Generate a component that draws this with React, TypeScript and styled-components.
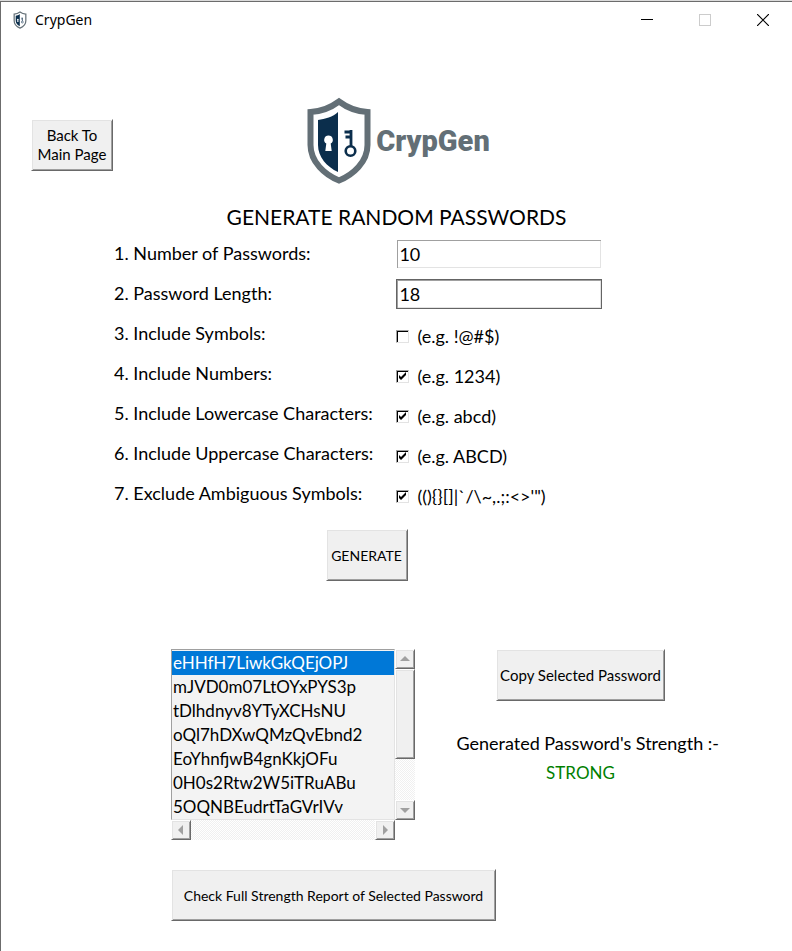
import React, { useState } from "react";
import styled, { createGlobalStyle, css } from "styled-components";

const GlobalStyle = createGlobalStyle`
  * { box-sizing: border-box; }
  body {
    margin: 0;
    background: #fff;
    color: #000;
    font-family: Lato, "Open Sans", sans-serif;
    font-variant-ligatures: none;
  }
`;

const Window = styled.div`
  min-height: 100vh;
  border-top: 1px solid #dadada;
  background: #fff;
`;

const Frame = styled.div`
  min-height: calc(100vh - 1px);
  border-top: 1px solid #6c6c6c;
  border-left: 1px solid #6c6c6c;
`;

const TitleBar = styled.header`
  display: flex;
  align-items: center;
  height: 36px;
  padding-left: 11px;
`;

const TitleText = styled.span`
  flex: 1;
  padding-left: 7px;
  font-family: "Noto Sans", "Open Sans", sans-serif;
  font-size: 14px;
  line-height: 20px;
`;

const CaptionButton = styled.button`
  display: flex;
  align-items: center;
  justify-content: center;
  width: 58px;
  height: 36px;
  padding: 0;
  border: 0;
  background: transparent;
`;

const Head = styled.div`
  display: grid;
  grid-template-columns: 1fr auto 1fr;
  align-items: start;
  padding: 59px 26px 0 30px;
`;

const BackCell = styled.div`
  padding-top: 22px;
`;

const Button = styled.button<{ $width: number; $compact?: boolean }>`
  min-width: ${(p) => p.$width}px;
  height: 52px;
  padding: 0;
  border: 1px solid;
  border-color: #fff #696969 #696969 #fff;
  box-shadow: inset 1px 1px #e3e3e3, inset -1px -1px #a0a0a0;
  background: #f0f0f0;
  color: #000;
  font-family: inherit;
  font-size: ${(p) => (p.$compact ? "14px" : "15px")};
  line-height: 19px;
  white-space: nowrap;
`;

const Brand = styled.div`
  display: flex;
  align-items: center;
  gap: 5px;
`;

const BrandName = styled.span`
  color: #636f76;
  font-family: Roboto, sans-serif;
  font-size: 29px;
  line-height: 40px;
  font-weight: 900;
`;

const Heading = styled.h1`
  margin: 17px 0 0;
  font-size: 21px;
  line-height: 30px;
  font-weight: 400;
  text-align: center;
`;

const Form = styled.form`
  display: grid;
  grid-template-columns: 282fr 395fr;
  grid-auto-rows: 40px;
  padding-left: 113px;
  margin-top: 2px;
  font-size: 18px;
  line-height: 24px;
`;

const Label = styled.label`
  align-self: center;
  padding-bottom: 2px;
`;

const TextBox = styled.input`
  align-self: center;
  width: 206px;
  height: 30px;
  padding: 0 2px;
  border: 1px solid #fff;
  box-shadow: inset 1px 1px #a0a0a0, inset -1px -1px #e3e3e3;
  outline: none;
  background: #fff;
  color: #000;
  font: inherit;
`;

const ActiveTextBox = styled(TextBox)`
  border-color: #646464;
`;

const Choice = styled.div`
  display: flex;
  align-items: center;
  gap: 8px;
  padding-top: 5px;
`;

const CheckBox = styled.input`
  appearance: none;
  width: 13px;
  height: 13px;
  margin: 0;
  border: 1px solid;
  border-color: #a0a0a0 #e3e3e3 #e3e3e3 #a0a0a0;
  box-shadow: inset 1px 1px #000;
  background: #fff;
  &:checked {
    background: #fff
      url("data:image/svg+xml,%3Csvg xmlns='http://www.w3.org/2000/svg' width='11' height='11'%3E%3Cpath d='M2 4v3l2 2 5-5V1L4 6z'/%3E%3C/svg%3E")
      center no-repeat;
  }
`;

const GenerateRow = styled.div`
  display: flex;
  justify-content: center;
  padding: 15px 60px 0 0;
`;

const Results = styled.section`
  display: flex;
  justify-content: space-between;
  align-items: flex-start;
  padding: 68px 73px 0 170px;
`;

const ListArea = styled.div`
  display: grid;
  grid-template-columns: 224px 20px;
  grid-template-rows: 171px 20px;
`;

const PasswordList = styled.select`
  appearance: none;
  margin: 0;
  padding: 1px 0 0;
  border: 1px solid;
  border-color: #a0a0a0 #e3e3e3 #e3e3e3 #a0a0a0;
  border-radius: 0;
  outline: none;
  overflow: hidden;
  background: #f3f3f3;
  color: #000;
  font-family: inherit;
  font-size: 17px;
  scrollbar-width: none;
  option {
    height: 24px;
    min-height: 24px;
    padding: 1px 1px 1px;
    line-height: 22px;
  }
  option:checked {
    background: #0078d7 linear-gradient(#0078d7, #0078d7);
    color: #fff;
    -webkit-text-fill-color: #fff;
  }
`;

const raised = css`
  border: 1px solid;
  border-color: #fff #696969 #696969 #fff;
  box-shadow: inset 1px 1px #e3e3e3, inset -1px -1px #a0a0a0;
  background: #f0f0f0;
`;

const Track = styled.div<{ $vertical?: boolean }>`
  display: flex;
  flex-direction: ${(p) => (p.$vertical ? "column" : "row")};
  justify-content: space-between;
  background: repeating-conic-gradient(#fff 0 25%, #f0f0f0 0 50%) 0 0 / 2px 2px;
`;

const ArrowButton = styled.button`
  ${raised}
  display: flex;
  align-items: center;
  justify-content: center;
  width: 20px;
  height: 20px;
  padding: 0;
`;

const Thumb = styled.div`
  ${raised}
  height: 90px;
  margin-bottom: auto;
`;

const Side = styled.div`
  display: flex;
  flex-direction: column;
  align-items: center;
  width: 277px;
`;

const StrengthLabel = styled.p`
  align-self: flex-end;
  margin: 27px 0 0;
  font-size: 18px;
  line-height: 30px;
  white-space: nowrap;
`;

const Strength = styled.output`
  color: #008000;
  font-size: 17px;
  line-height: 30px;
`;

const ReportRow = styled.div`
  padding: 29px 0 29px 170px;
`;

function Shield({ width, height }: { width: number; height: number }) {
  return (
    <svg width={width} height={height} viewBox="0 0 64 88" aria-hidden="true">
      <path
        d="M32 4.500C24 10.500 14 14.500 3.500 15V48C3.500 65 18 78 32 83.500C46 78 60.500 65 60.500 48V15C50 14.500 40 10.500 32 4.500Z"
        fill="#fff"
        stroke="#636f76"
        strokeWidth="6"
      />
      <path d="M31 15C26 20 18 22 11 23V48C11 60 20 70 31 75Z" fill="#0b2e4c" />
      <path d="M21.500 38.500a4.300 4.300 0 0 1 2.200 8l1 7.500h-6.400l1-7.500a4.300 4.300 0 0 1 2.200-8Z" fill="#fff" />
      <g fill="none" stroke="#0b2e4c">
        <circle cx="43.500" cy="54" r="4.800" strokeWidth="2.600" />
        <path d="M44 49V33M45 35H37.500M44 40H38.500" strokeWidth="2.800" />
      </g>
    </svg>
  );
}

function Arrow({ d }: { d: string }) {
  return (
    <svg width="10" height="10" viewBox="0 0 10 10" aria-hidden="true">
      <path d={d} fill="#a0a0a0" />
    </svg>
  );
}

const passwords = [
  "eHHfH7LiwkGkQEjOPJ",
  "mJVD0m07LtOYxPYS3p",
  "tDlhdnyv8YTyXCHsNU",
  "oQl7hDXwQMzQvEbnd2",
  "EoYhnfjwB4gnKkjOFu",
  "0H0s2Rtw2W5iTRuABu",
  "5OQNBEudrtTaGVrIVv",
];

const options = [
  { id: "symbols", label: "3. Include Symbols:", hint: "(e.g. !@#$)", on: false },
  { id: "numbers", label: "4. Include Numbers:", hint: "(e.g. 1234)", on: true },
  { id: "lower", label: "5. Include Lowercase Characters:", hint: "(e.g. abcd)", on: true },
  { id: "upper", label: "6. Include Uppercase Characters:", hint: "(e.g. ABCD)", on: true },
  { id: "ambiguous", label: "7. Exclude Ambiguous Symbols:", hint: "((){}[]|`/\\~,.;:<>'\")", on: true },
];

export default function App() {
  const [selected, setSelected] = useState(passwords[0]);

  return (
    <Window>
      <GlobalStyle />
      <Frame>
        <TitleBar>
          <Shield width={16} height={18} />
          <TitleText>CrypGen</TitleText>
          <CaptionButton aria-label="Minimize">
            <svg width="12" height="12" shapeRendering="crispEdges">
              <path d="M0 5.500H12" stroke="#000" />
            </svg>
          </CaptionButton>
          <CaptionButton aria-label="Maximize" disabled>
            <svg width="12" height="12" shapeRendering="crispEdges">
              <path d="M.5.500H11.500V11.500H.5Z" stroke="#ccc" fill="none" />
            </svg>
          </CaptionButton>
          <CaptionButton aria-label="Close">
            <svg width="12" height="12">
              <path d="M0 0L12 12M12 0L0 12" stroke="#000" strokeWidth="1.200" />
            </svg>
          </CaptionButton>
        </TitleBar>

        <main>
          <Head>
            <BackCell>
              <Button $width={82}>
                Back To
                <br />
                Main Page
              </Button>
            </BackCell>
            <Brand>
              <Shield width={64} height={88} />
              <BrandName>CrypGen</BrandName>
            </Brand>
          </Head>

          <Heading>GENERATE RANDOM PASSWORDS</Heading>

          <Form id="generator" onSubmit={(e) => e.preventDefault()}>
            <Label htmlFor="count">1. Number of Passwords:</Label>
            <TextBox id="count" defaultValue="10" />
            <Label htmlFor="length">2. Password Length:</Label>
            <ActiveTextBox id="length" defaultValue="18" />
            {options.map((o) => (
              <React.Fragment key={o.id}>
                <Label htmlFor={o.id}>{o.label}</Label>
                <Choice>
                  <CheckBox type="checkbox" id={o.id} defaultChecked={o.on} />
                  <Label htmlFor={o.id}>{o.hint}</Label>
                </Choice>
              </React.Fragment>
            ))}
          </Form>

          <GenerateRow>
            <Button type="submit" form="generator" $width={82} $compact>
              GENERATE
            </Button>
          </GenerateRow>

          <Results>
            <ListArea>
              <PasswordList
                size={7}
                aria-label="Generated passwords"
                value={selected}
                onChange={(e) => setSelected(e.target.value)}
              >
                {passwords.map((p) => (
                  <option key={p}>{p}</option>
                ))}
              </PasswordList>
              <Track $vertical>
                <ArrowButton aria-label="Scroll up">
                  <Arrow d="M0 7L5 2L10 7Z" />
                </ArrowButton>
                <Thumb />
                <ArrowButton aria-label="Scroll down">
                  <Arrow d="M0 3L5 8L10 3Z" />
                </ArrowButton>
              </Track>
              <Track>
                <ArrowButton aria-label="Scroll left">
                  <Arrow d="M7 0L2 5L7 10Z" />
                </ArrowButton>
                <ArrowButton aria-label="Scroll right">
                  <Arrow d="M3 0L8 5L3 10Z" />
                </ArrowButton>
              </Track>
            </ListArea>
            <Side>
              <Button $width={169}>Copy Selected Password</Button>
              <StrengthLabel>Generated Password's Strength :-</StrengthLabel>
              <Strength>STRONG</Strength>
            </Side>
          </Results>

          <ReportRow>
            <Button $width={325} $compact>
              Check Full Strength Report of Selected Password
            </Button>
          </ReportRow>
        </main>
      </Frame>
    </Window>
  );
}
